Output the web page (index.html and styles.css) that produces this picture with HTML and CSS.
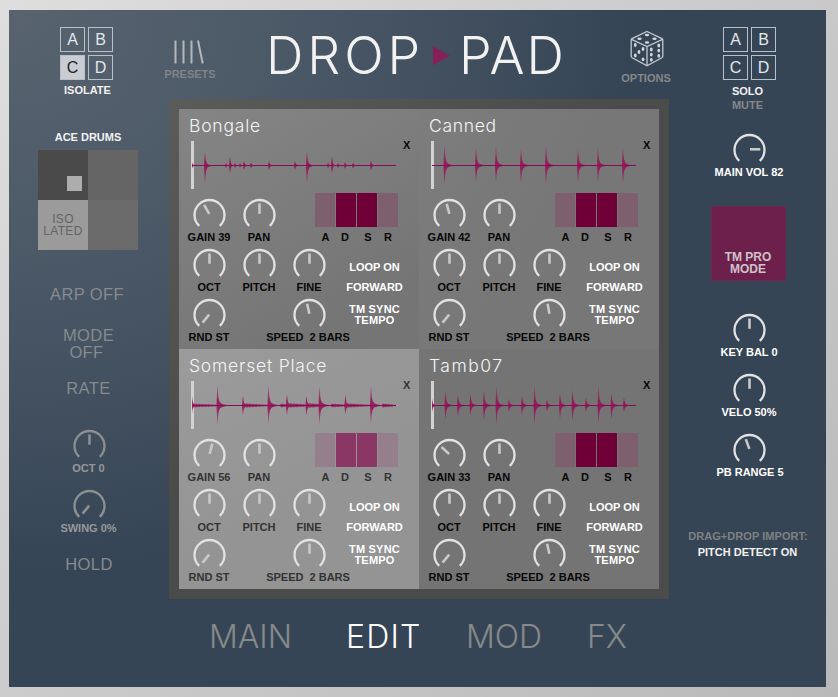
FILE: index.html
```html
<!DOCTYPE html>
<html lang="en">
<head>
<meta charset="utf-8">
<title>Drop Pad</title>
<link rel="stylesheet" href="styles.css">
</head>
<body>
<main class="panel">
  <aside class="side side-left">
    <div class="slots">
      <span class="slot">A</span><span class="slot">B</span>
      <span class="slot slot-on">C</span><span class="slot">D</span>
    </div>
    <div class="label isolate">ISOLATE</div>
    <div class="label kit">ACE DRUMS</div>
    <div class="xy">
      <div class="xy-cell xy-a"><i class="xy-dot"></i></div>
      <div class="xy-cell xy-b"></div>
      <div class="xy-cell xy-c">ISO<br>LATED</div>
      <div class="xy-cell xy-d"></div>
    </div>
    <div class="arp arp-onoff">ARP OFF</div>
    <div class="arp arp-mode">MODE<br><span class="arp-sub">OFF</span></div>
    <div class="arp arp-rate">RATE</div>
    <div class="knob dim knob-oct" data-angle="0" data-label="OCT 0"></div>
    <div class="knob dim knob-swing" data-angle="-140" data-label="SWING 0%"></div>
    <div class="arp arp-hold">HOLD</div>
  </aside>

  <section class="center">
    <header class="top">
      <div class="presets">
        <svg class="presets-icon" width="32" height="24" viewBox="0 0 32 24"><path d="M2.5 0.5V23.5M10.5 0.5V23.5M18.5 0.5V23.5M25 0.5L29.7 23.5"/></svg>
        <div class="label">PRESETS</div>
      </div>
      <h1 class="logo"><span class="logo-drop">DROP</span><svg class="logo-mark" width="17" height="20" viewBox="0 0 17 20"><path d="M0 0.3L17 9.7L0 19.3Z"/></svg><span class="logo-pad">PAD</span></h1>
      <div class="options">
        <svg class="dice" width="34" height="37" viewBox="0 0 34 37">
          <g class="dice-edges"><path d="M17 1.5L32 8.6Q32.8 9 32.8 10V26Q32.8 27.2 31.8 27.8L17 35.8L2.2 27.8Q1.2 27.2 1.2 26V10Q1.2 9 2 8.6ZM1.5 9.3L17 16.5L32.5 9.3M17 16.5V35.5"/></g>
          <g class="dice-pips">
            <ellipse cx="17" cy="5" rx="2.2" ry="1.2"/><ellipse cx="9.5" cy="8.7" rx="2.2" ry="1.2"/><ellipse cx="24.5" cy="8.7" rx="2.2" ry="1.2"/><ellipse cx="17" cy="12.5" rx="2.2" ry="1.2"/>
            <ellipse cx="5.3" cy="15" rx="1.4" ry="1.9"/><ellipse cx="13" cy="19" rx="1.4" ry="1.9"/><ellipse cx="9" cy="22" rx="1.4" ry="1.9"/><ellipse cx="5.3" cy="25.5" rx="1.4" ry="1.9"/><ellipse cx="13" cy="29.3" rx="1.4" ry="1.9"/>
            <ellipse cx="21.3" cy="19.5" rx="1.4" ry="1.9"/><ellipse cx="28.8" cy="15.5" rx="1.4" ry="1.9"/><ellipse cx="21.3" cy="24.6" rx="1.4" ry="1.9"/><ellipse cx="28.8" cy="20.6" rx="1.4" ry="1.9"/><ellipse cx="21.3" cy="29.8" rx="1.4" ry="1.9"/><ellipse cx="28.8" cy="25.8" rx="1.4" ry="1.9"/>
          </g>
        </svg>
        <div class="label">OPTIONS</div>
      </div>
    </header>
    <div class="pads" id="pads"></div>
    <nav class="tabs">
      <span class="tab tab-main">MAIN</span>
      <span class="tab tab-edit">EDIT</span>
      <span class="tab tab-mod">MOD</span>
      <span class="tab tab-fx">FX</span>
    </nav>
  </section>

  <aside class="side side-right">
    <div class="slots">
      <span class="slot">A</span><span class="slot">B</span>
      <span class="slot">C</span><span class="slot">D</span>
    </div>
    <div class="label solo">SOLO</div>
    <div class="label mute">MUTE</div>
    <div class="knob knob-vol" data-angle="90" data-label="MAIN VOL 82"></div>
    <div class="promode">TM PRO<br>MODE</div>
    <div class="knob knob-key" data-angle="0" data-label="KEY BAL 0"></div>
    <div class="knob knob-gap" data-angle="0" data-label="VELO 50%"></div>
    <div class="knob knob-gap knob-bend" data-angle="-20" data-label="PB RANGE 5"></div>
    <div class="label import">DRAG+DROP IMPORT:</div>
    <div class="label detect">PITCH DETECT ON</div>
  </aside>
</main>
<script src="app.js"></script>
</body>
</html>
```
FILE: styles.css
```css
* { box-sizing: border-box; }
body {
  margin: 0;
  width: 838px;
  height: 697px;
  padding: 10px 12px 10px 9px;
  overflow: hidden;
  background: linear-gradient(135deg, #dedede 0%, #cccccc 45%, #b9b9b9 100%);
  font-family: "Liberation Sans", Arial, sans-serif;
  color: #f2f2f2;
}
.panel {
  width: 817px;
  height: 677px;
  display: grid;
  grid-template-columns: 160px 500px 157px;
  background: radial-gradient(ellipse 620px 560px at 0 0, #58636f 0%, #4d5a68 40%, #414f5f 72%, #364555 100%);
}
.label {
  font-size: 11px;
  line-height: 12px;
  font-weight: 700;
  text-align: center;
  white-space: pre;
}
.side { display: flex; flex-direction: column; align-items: center; }
.side-left { padding: 17px 2px 0 0; }
.side-right { padding-top: 17px; }

.slots { display: grid; grid-template-columns: 25px 25px; gap: 3px; }
.side-left .slots { margin-right: 3px; }
.side-right .slots { margin-left: 4px; }
.slot {
  height: 25px;
  border: 1px solid #b9bfc7;
  font-size: 16px;
  line-height: 24px;
  text-align: center;
  color: #e4e6e9;
}
.slot-on { background: #c9ccd2; color: #222; }
.isolate { margin: 4px 1px 0 0; }
.kit { margin-top: 35px; }
.xy {
  width: 100px;
  height: 100px;
  margin-top: 7px;
  display: grid;
  grid-template-columns: 50px 50px;
  grid-template-rows: 50px 50px;
}
.xy-a { background: #4a4a4a; padding: 26px 0 0 29px; }
.xy-b { background: #656565; }
.xy-c {
  background: #9b9b9b;
  color: #646464;
  font-size: 12px;
  line-height: 12px;
  letter-spacing: .3px;
  text-align: center;
  padding-top: 13px;
}
.xy-d { background: #6b6b6b; }
.xy-dot { display: block; width: 15px; height: 15px; background: #adadad; }
.arp {
  font-size: 16.5px;
  line-height: 17px;
  letter-spacing: .4px;
  text-align: center;
  color: #878a8e;
}
.arp-onoff { margin: 36px 2px 0 0; }
.arp-mode { margin: 24px 0 0 1px; }
.arp-rate { margin: 19px 0 0 1px; }
.arp-sub { margin-right: 4px; }
.knob-oct { margin-top: 32px; }
.knob-swing { margin-top: 15px; }
.arp-hold { margin: 22px 0 0 2px; }

.knob {
  width: 50px;
  display: flex;
  flex-direction: column;
  align-items: center;
  color: #fff;
}
.side .knob { margin-left: 2px; }
.side-right .knob { margin-left: 4px; }
.side-left .knob svg { margin-left: 1px; }
.side-right .knob svg { margin-right: 1px; }
.knob svg { display: block; flex: none; }
.knob .label { margin: 3px 1px 0 0; }
.ring { fill: none; stroke: #e2e2e2; stroke-width: 2.3; }
.hand { stroke: #c9c9c9; stroke-width: 2.6; }
.dim { color: #96989b; }
.dim .ring { stroke: #8d8f92; }
.dim .hand { stroke: #8d8f92; }

.solo { margin-top: 5px; }
.mute { margin-top: 2px; color: #85888b; }
.knob-vol { margin-top: 22px; }
.promode {
  width: 75px;
  height: 75px;
  margin: 28px 0 0 1px;
  padding-top: 44px;
  background: #6d204b;
  border: 1px solid #6e2850;
  color: #cfc2ca;
  font-size: 12px;
  line-height: 12px;
  font-weight: 700;
  text-align: center;
}
.knob-key { margin-top: 32px; }
.knob-gap { margin-top: 15px; }
.side .knob-bend .label { margin-right: -1px; }
.import { margin: 52px 0 0 1px; color: #7e8184; letter-spacing: .05px; }
.detect { margin-top: 4px; }

.center { display: flex; flex-direction: column; }
.top { height: 89px; margin: 0 -5px; display: flex; align-items: flex-start; }
.presets { width: 52px; padding-top: 30px; text-align: center; color: #808488; }
.presets-icon { display: block; margin: 0 0 4px 9px; fill: none; stroke: #b5b7b9; stroke-width: 2; }
.logo {
  display: flex;
  align-items: flex-start;
  width: 405px;
  height: 89px;
  margin: 0;
  padding: 14px 0 0 50px;
  font-family: Inter, "Liberation Sans", sans-serif;
  font-size: 52px;
  line-height: 64px;
  font-weight: 300;
}
.logo-drop { width: 167px; letter-spacing: 3.9px; }
.logo-mark { flex: none; margin-top: 22px; fill: #85205a; }
.logo-pad { margin-left: 9px; letter-spacing: 1.8px; }
.options { width: 50px; padding-top: 20px; color: #85888b; }
.dice { display: block; margin: 0 0 5px 9px; }
.dice-edges { fill: none; stroke: #c3c8ce; stroke-width: 1.3; }
.dice-pips { fill: #d3d7db; }

.pads {
  width: 500px;
  height: 500px;
  padding: 10px;
  display: grid;
  grid-template-columns: 240px 240px;
  grid-template-rows: 240px 240px;
  background: radial-gradient(ellipse 450px 400px at 0 0, #5b5b5a 0%, #4b4b4a 100%);
}
.pad { position: relative; color: #080808; overflow: hidden; }
.pad-a { background: linear-gradient(150deg, #858585, #757575 80%); }
.pad-b { background: linear-gradient(120deg, #7d7d7d, #777 50%); }
.pad-c { background: linear-gradient(150deg, #9b9b9b, #949494 60%); color: #333; }
.pad-d { background: #747474; }
.pad-title {
  height: 32px;
  padding: 6px 0 0 10px;
  font-family: Inter, "Liberation Sans", sans-serif;
  font-size: 17.5px;
  line-height: 22px;
  font-weight: 300;
  letter-spacing: .8px;
  color: #f4f4f4;
  white-space: pre;
}
.pad-b .pad-title { letter-spacing: .7px; }
.pad-d .pad-title { letter-spacing: 1.5px; }
.wave-row { display: flex; height: 57px; padding-left: 12px; }
.wave-start { width: 3px; height: 48px; background: #d2d2d2; }
.wave { display: block; margin-left: -3px; width: 212px; height: 48px; }
.wave-line { stroke: #890c52; stroke-width: 1.1; }
.close { line-height: 10px; margin-top: -1px; }
.controls {
  display: grid;
  grid-template-columns: 50px 50px 50px 80px;
  grid-template-rows: 50px 50px 50px;
  padding-left: 5px;
}
.controls .knob { color: inherit; }
.controls .knob .label { margin-right: 0; }
.env { grid-column: 3 / 5; margin: -5px 0 0 31px; }
.env-bars { display: grid; grid-template-columns: repeat(4, 20px); gap: 1px; height: 34px; }
.bar { background: #7d5f6e; }
.bar-full { background: #6e0037; }
.pad-c .bar { background: #957f8c; }
.pad-c .bar-full { background: #8b3766; }
.env-names { display: grid; grid-template-columns: 21px 18px 28px 12px; margin-top: 4px; }
.modes { grid-column: 4; grid-row: 2 / 4; padding: 13px 0 0 1px; color: #fff; }
.mode-dir { margin-top: 8px; }
.mode-sync { margin-top: 11px; line-height: 11px; letter-spacing: .2px; }
.speed { grid-column: 3; grid-row: 3; }
.controls .speed .label { margin-right: 2px; }

.tabs {
  display: flex;
  padding: 18px 0 0 40px;
  font-family: Inter, "Liberation Sans", sans-serif;
  font-size: 32px;
  line-height: 40px;
  font-weight: 300;
  color: #87898b;
}
.tab-main { width: 137px; }
.tab-edit { width: 120px; color: #fff; letter-spacing: 1.2px; }
.tab-mod { width: 121px; }
```
FILE: app.js
```js
// Each peak is [x, height above, height below, decay length].
const pads = [
  { id: "a", name: "Bongale", gain: "GAIN 39", gainAngle: -30, speedAngle: -13,
    peaks: [[0,3,3,5],[13,14,19,4],[34,2.5,2.5,3],[38,9,8,2],[43,2.5,2.5,3],[48,2.5,2.5,2],[52,4.5,4.5,4],[59,3,3,3],[77,4.5,4.5,4],[103,4.5,4.5,4],[115,14,19,4],[136,3,3,3],[140,9,8,2],[146,2.5,2.5,3],[153,3.5,3.5,3],[161,3,3,3],[179,5,5,4]] },
  { id: "b", name: "Canned", gain: "GAIN 42", gainAngle: -15, speedAngle: -10,
    peaks: [[12.5,21,21,5],[44,18,17,5],[64,20,17,5],[89,17,19,5],[114,21,20,5],[146,17,17,5],[166,18,17,5],[191,19,19,5]] },
  { id: "c", name: "Somerset Place", gain: "GAIN 56", gainAngle: 15, speedAngle: 0,
    peaks: [[0,10,8,2],[1,3.2,3.2,20],[25.5,21,20,6],[51,10,10,2],[52,3.6,3.6,18],[76.5,21,19,6],[89,3,3,8],[95,12,10,2],[96,4,3.6,18],[114.5,10,10,2],[115.5,4,4,14],[127.5,20,20,6],[140,3,3,14],[153.5,11,9,2],[154.5,3.6,3.6,18],[179,21,19,6],[191,3.2,3.2,10]] },
  { id: "d", name: "Tamb07", gain: "GAIN 33", gainAngle: -48, speedAngle: -13,
    peaks: [[0,7,7,3],[13.5,15,14,5],[26,11,11,5],[38.5,12,10,5],[52,15,16,5],[64.5,20,20,5],[77,7,7,5],[90,10,10,5],[102.5,20,20,5],[115,6,6,5],[128,12,14,5],[140.5,16,16,5],[154,8,7,5],[166.5,20,19,5],[179.5,13,14,5],[192,8,7,5]] }
];

function knobSvg(angle) {
  return `<svg width="35" height="30" viewBox="0 0 35 30"><path class="ring" d="M7.2 27.9A15 15 0 1 1 27.8 27.9"/><path class="hand" d="M17.5 15.8V5.5" transform="rotate(${angle} 17.5 16.3)"/></svg>`;
}

function knob(angle, label, extra = "") {
  return `<div class="knob ${extra}">${knobSvg(angle)}<div class="label">${label}</div></div>`;
}

// Sums exponentially decaying hits into one outline, sampled every half pixel.
function wavePath(peaks) {
  const up = [], down = [];
  for (let x = 0; x <= 204; x += 0.5) {
    let u = 0, d = 0;
    for (const [px, hu, hd, len] of peaks) {
      const t = x - px;
      if (t < -0.7 || t > len * 2.2) continue;
      const long = len > 6;
      const body = long ? 1 - t / (len * 2) : 0;
      const ripple = long ? 0.7 + 0.3 * Math.sin(x * 4.3) : 1;
      const thin = Math.exp(-Math.abs(t) * 1.4);
      const tail = 0.24 * Math.exp(-Math.max(t, 0) / (len * 0.7));
      const env = long ? Math.max(body * ripple * 0.75, 0) : 0.76 * thin + tail;
      u = Math.max(u, hu * env);
      d = Math.max(d, hd * env);
    }
    up.push(`${x + 1} ${(24.5 - u).toFixed(2)}`);
    down.unshift(`${x + 1} ${(24.5 + d).toFixed(2)}`);
  }
  return `M${up.join("L")}L${down.join("L")}Z`;
}

function pad(p) {
  return `<article class="pad pad-${p.id}">
    <div class="pad-title">${p.name}</div>
    <div class="wave-row">
      <div class="wave-start"></div>
      <svg class="wave" viewBox="0 0 212 48">
        <defs><linearGradient id="fade-${p.id}" gradientUnits="userSpaceOnUse" x1="0" y1="4" x2="0" y2="44">
          <stop offset="0" stop-color="#961457" stop-opacity=".35"/><stop offset=".4" stop-color="#961457" stop-opacity=".9"/>
          <stop offset=".6" stop-color="#961457" stop-opacity=".9"/><stop offset="1" stop-color="#961457" stop-opacity=".35"/>
        </linearGradient></defs>
        <path d="${wavePath(p.peaks)}" fill="url(#fade-${p.id})"/>
        <path class="wave-line" d="M1 24.5H205"/>
      </svg>
      <div class="label close">X</div>
    </div>
    <div class="controls">
      ${knob(p.gainAngle, p.gain)}${knob(0, "PAN")}
      <div class="env">
        <div class="env-bars"><i class="bar"></i><i class="bar bar-full"></i><i class="bar bar-full"></i><i class="bar"></i></div>
        <div class="env-names"><span class="label">A</span><span class="label">D</span><span class="label">S</span><span class="label">R</span></div>
      </div>
      ${knob(0, "OCT")}${knob(0, "PITCH")}${knob(0, "FINE")}
      <div class="modes">
        <div class="label">LOOP ON</div>
        <div class="label mode-dir">FORWARD</div>
        <div class="label mode-sync">TM SYNC<br>TEMPO</div>
      </div>
      ${knob(-140, "RND ST")}${knob(p.speedAngle, "SPEED  2 BARS", "speed")}
    </div>
  </article>`;
}

document.getElementById("pads").innerHTML = pads.map(pad).join("");
document.querySelectorAll(".side .knob").forEach(el => {
  el.innerHTML = `${knobSvg(el.dataset.angle)}<div class="label">${el.dataset.label}</div>`;
});
```
